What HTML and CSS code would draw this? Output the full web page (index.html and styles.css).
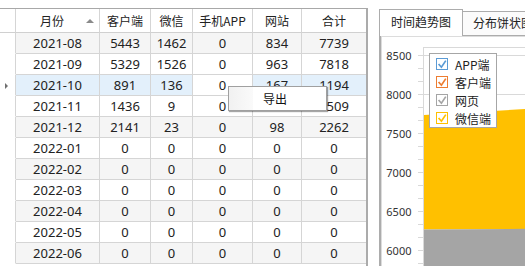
FILE: index.html
```html
<!DOCTYPE html>
<html lang="zh">
<head>
<meta charset="utf-8">
<title>统计</title>
<link rel="stylesheet" href="styles.css">
</head>
<body>
<div class="app">
  <div class="grid">
    <div class="row head">
      <div class="c rh"></div>
      <div class="c w1 sortcol"><span>月份</span><i class="sort-up"></i></div>
      <div class="c w2">客户端</div>
      <div class="c w3">微信</div>
      <div class="c w4">手机APP</div>
      <div class="c w5">网站</div>
      <div class="c w6">合计</div>
    </div>
    <div class="row alt"><div class="c rh"></div><div class="c w1">2021-08</div><div class="c w2">5443</div><div class="c w3">1462</div><div class="c w4">0</div><div class="c w5">834</div><div class="c w6">7739</div></div>
    <div class="row"><div class="c rh"></div><div class="c w1">2021-09</div><div class="c w2">5329</div><div class="c w3">1526</div><div class="c w4">0</div><div class="c w5">963</div><div class="c w6">7818</div></div>
    <div class="row sel"><div class="c rh"><i class="cur"></i></div><div class="c w1">2021-10</div><div class="c w2">891</div><div class="c w3">136</div><div class="c w4 current">0</div><div class="c w5">167</div><div class="c w6">1194</div></div>
    <div class="row"><div class="c rh"></div><div class="c w1">2021-11</div><div class="c w2">1436</div><div class="c w3">9</div><div class="c w4">0</div><div class="c w5">64</div><div class="c w6">1509</div></div>
    <div class="row alt"><div class="c rh"></div><div class="c w1">2021-12</div><div class="c w2">2141</div><div class="c w3">23</div><div class="c w4">0</div><div class="c w5">98</div><div class="c w6">2262</div></div>
    <div class="row"><div class="c rh"></div><div class="c w1">2022-01</div><div class="c w2">0</div><div class="c w3">0</div><div class="c w4">0</div><div class="c w5">0</div><div class="c w6">0</div></div>
    <div class="row alt"><div class="c rh"></div><div class="c w1">2022-02</div><div class="c w2">0</div><div class="c w3">0</div><div class="c w4">0</div><div class="c w5">0</div><div class="c w6">0</div></div>
    <div class="row"><div class="c rh"></div><div class="c w1">2022-03</div><div class="c w2">0</div><div class="c w3">0</div><div class="c w4">0</div><div class="c w5">0</div><div class="c w6">0</div></div>
    <div class="row alt"><div class="c rh"></div><div class="c w1">2022-04</div><div class="c w2">0</div><div class="c w3">0</div><div class="c w4">0</div><div class="c w5">0</div><div class="c w6">0</div></div>
    <div class="row"><div class="c rh"></div><div class="c w1">2022-05</div><div class="c w2">0</div><div class="c w3">0</div><div class="c w4">0</div><div class="c w5">0</div><div class="c w6">0</div></div>
    <div class="row alt"><div class="c rh"></div><div class="c w1">2022-06</div><div class="c w2">0</div><div class="c w3">0</div><div class="c w4">0</div><div class="c w5">0</div><div class="c w6">0</div></div>
  </div>

  <div class="tabs">
    <div class="tabbar">
      <div class="tab active">时间趋势图</div>
      <div class="tab">分布饼状图</div>
    </div>
    <div class="page">
      <div class="chart">
        <svg class="plot" width="143" height="229" viewBox="382 37 143 229" xmlns="http://www.w3.org/2000/svg">
          <line x1="423" y1="47.5" x2="525" y2="47.5" stroke="#D9D9D9"/>
          <g stroke="#D9D9D9">
            <line x1="418" y1="55.5" x2="525" y2="55.5"/>
            <line x1="418" y1="94.5" x2="525" y2="94.5"/>
            <line x1="418" y1="133.5" x2="525" y2="133.5"/>
            <line x1="418" y1="172.5" x2="525" y2="172.5"/>
            <line x1="418" y1="211.5" x2="525" y2="211.5"/>
            <line x1="418" y1="250.5" x2="525" y2="250.5"/>
            <line x1="418" y1="68.5" x2="423" y2="68.5"/>
            <line x1="418" y1="81.5" x2="423" y2="81.5"/>
            <line x1="418" y1="107.5" x2="423" y2="107.5"/>
            <line x1="418" y1="120.5" x2="423" y2="120.5"/>
            <line x1="418" y1="146.5" x2="423" y2="146.5"/>
            <line x1="418" y1="159.5" x2="423" y2="159.5"/>
            <line x1="418" y1="185.5" x2="423" y2="185.5"/>
            <line x1="418" y1="198.5" x2="423" y2="198.5"/>
            <line x1="418" y1="224.5" x2="423" y2="224.5"/>
            <line x1="418" y1="237.5" x2="423" y2="237.5"/>
            <line x1="418" y1="263.5" x2="423" y2="263.5"/>
            <line x1="423.5" y1="47" x2="423.5" y2="266"/>
          </g>
          <polygon points="424,115 525,109 525,229 424,229.5" fill="#FFC000"/>
          <polygon points="424,229.5 525,228.8 525,266 424,266" fill="#A5A5A5"/>
          <g class="ylab" text-anchor="end">
            <text x="411.5" y="59.5">8500</text>
            <text x="411.5" y="98.5">8000</text>
            <text x="411.5" y="137.5">7500</text>
            <text x="411.5" y="176.5">7000</text>
            <text x="411.5" y="215.5">6500</text>
            <text x="411.5" y="254.5">6000</text>
          </g>
        </svg>
        <div class="legend">
          <div class="lg-item"><span class="cb cb-blue"><svg width="10" height="10" viewBox="0 0 10 10"><path d="M1.6 5 L4.4 8.2 L8.8 1.6" fill="none" stroke="#5B9BD5" stroke-width="1.7"/></svg></span><span>APP端</span></div>
          <div class="lg-item"><span class="cb cb-orange"><svg width="10" height="10" viewBox="0 0 10 10"><path d="M1.6 5 L4.4 8.2 L8.8 1.6" fill="none" stroke="#ED7D31" stroke-width="1.7"/></svg></span><span>客户端</span></div>
          <div class="lg-item"><span class="cb cb-gray"><svg width="10" height="10" viewBox="0 0 10 10"><path d="M1.6 5 L4.4 8.2 L8.8 1.6" fill="none" stroke="#A5A5A5" stroke-width="1.7"/></svg></span><span>网页</span></div>
          <div class="lg-item"><span class="cb cb-yellow"><svg width="10" height="10" viewBox="0 0 10 10"><path d="M1.6 5 L4.4 8.2 L8.8 1.6" fill="none" stroke="#FFC000" stroke-width="1.7"/></svg></span><span>微信端</span></div>
        </div>
      </div>
    </div>
  </div>

  <div class="menu">
    <div class="menu-item"><span class="menu-icon"></span><span class="menu-label">导出</span></div>
  </div>
</div>
</body>
</html>
```

FILE: styles.css
```css
* { box-sizing: border-box; }
html, body { margin: 0; padding: 0; background: #fff; }
body { width: 525px; height: 266px; overflow: hidden; }

.app {
  position: relative;
  display: flex;
  width: 525px;
  height: 266px;
  overflow: hidden;
  background: #fff;
  font-family: "Noto Sans", "Noto Sans CJK SC", sans-serif;
  color: #222;
}

/* ---------- grid ---------- */
.grid {
  flex: none;
  width: 368px;
  margin-top: 8px;
  border-top: 1px solid #A8A8A8;
  border-right: 2px solid #ABABAB;
  overflow: hidden;
}
.row { display: flex; height: 21px; }
.row.head { height: 24px; }
.c {
  flex: none;
  height: 100%;
  border-right: 1px solid #D5D5D5;
  border-bottom: 1px solid #D5D5D5;
  text-align: center;
  font-size: 13px;
  line-height: 20px;
  white-space: nowrap;
  overflow: hidden;
}
.row.alt .c { background: #F5F5F5; }
.row.sel .c { background: #E3F0FB; }
.row.sel .c.current { background: #fff; }
.row .c.rh { background: #fff; border-bottom-color: transparent; }
.head .c {
  background: #fff;
  font-family: "Noto Sans CJK SC", sans-serif;
  font-size: 12px;
  line-height: 23px;
  color: #222;
  border-bottom-color: #D0D0D0;
}
.head .c.rh { border-bottom-color: #D0D0D0; }
.rh { width: 16px; display: flex; align-items: center; padding-left: 5px; }
.w1 { width: 84px; }
.w2 { width: 51px; }
.w3 { width: 42px; }
.w4 { width: 60px; }
.w5 { width: 49px; }
.w6 { width: 64px; border-right: none; }

.sortcol { display: flex; align-items: center; }
.sortcol span { flex: 1; text-align: center; padding-left: 2px; }
.sort-up {
  width: 0; height: 0;
  margin-right: 5px;
  border-left: 4px solid transparent;
  border-right: 4px solid transparent;
  border-bottom: 4px solid #8A8A8A;
}
.cur {
  display: block;
  width: 0; height: 0;
  margin-top: 1px;
  border-left: 3px solid #707070;
  border-top: 3px solid transparent;
  border-bottom: 3px solid transparent;
}

/* ---------- tabs ---------- */
.tabs {
  flex: 1;
  min-width: 0;
  margin-left: 11px;
  display: flex;
  flex-direction: column;
}
.tabbar {
  flex: none;
  height: 35px;
  display: flex;
  align-items: flex-end;
  white-space: nowrap;
}
.tab {
  flex: none;
  height: 24px;
  padding: 0 10px;
  border: 1px solid #ACACAC;
  border-bottom: none;
  border-left: none;
  background: #FBFBFB;
  font-family: "Noto Sans CJK SC", sans-serif;
  font-size: 12px;
  line-height: 22px;
  color: #222;
}
.tab.active {
  width: 84px;
  height: 27px;
  margin-bottom: -1px;
  padding: 0;
  text-align: center;
  border-left: 1px solid #ACACAC;
  background: #fff;
  line-height: 24px;
  position: relative;
  z-index: 1;
}
.page {
  flex: 1;
  min-height: 0;
  border-top: 1px solid #ACACAC;
  border-left: 2px solid #ACACAC;
  display: flex;
}
.chart {
  position: relative;
  flex: 1;
  border-top: 1px solid #DCDCDC;
  border-left: 1px solid #DCDCDC;
  overflow: hidden;
}
.plot { display: block; }
.ylab { font-family: "Noto Sans", sans-serif; font-size: 11px; fill: #333; }

.legend {
  position: absolute;
  left: 47px;
  top: 16px;
  width: 68px;
  padding-top: 1px;
  border: 1px solid #A6A6A6;
  background: #fff;
}
.lg-item {
  display: flex;
  align-items: center;
  height: 18px;
  padding-left: 6px;
  font-family: "Noto Sans CJK SC", sans-serif;
  font-size: 12px;
  color: #222;
  white-space: nowrap;
}
.cb {
  flex: none;
  width: 12px;
  height: 12px;
  margin-right: 7px;
  border: 1px solid;
  background: #fff;
  display: flex;
}
.cb svg { display: block; }
.cb-blue { border-color: #5B9BD5; }
.cb-orange { border-color: #ED7D31; }
.cb-gray { border-color: #A5A5A5; }
.cb-yellow { border-color: #FFC000; }

/* ---------- context menu ---------- */
.menu {
  position: absolute;
  left: 228px;
  top: 86px;
  width: 99px;
  height: 25px;
  border: 1px solid #A0A0A0;
  background: #fff;
  box-shadow: 1px 1px 1px rgba(0, 0, 0, 0.35);
}
.menu-item { display: flex; height: 100%; }
.menu-icon {
  flex: none;
  width: 24px;
  background: linear-gradient(to right, #F1F1F1, #FAFAFA);
}
.menu-label {
  padding-left: 10px;
  font-family: "Noto Sans CJK SC", sans-serif;
  font-size: 12px;
  line-height: 23px;
  color: #111;
}
```
